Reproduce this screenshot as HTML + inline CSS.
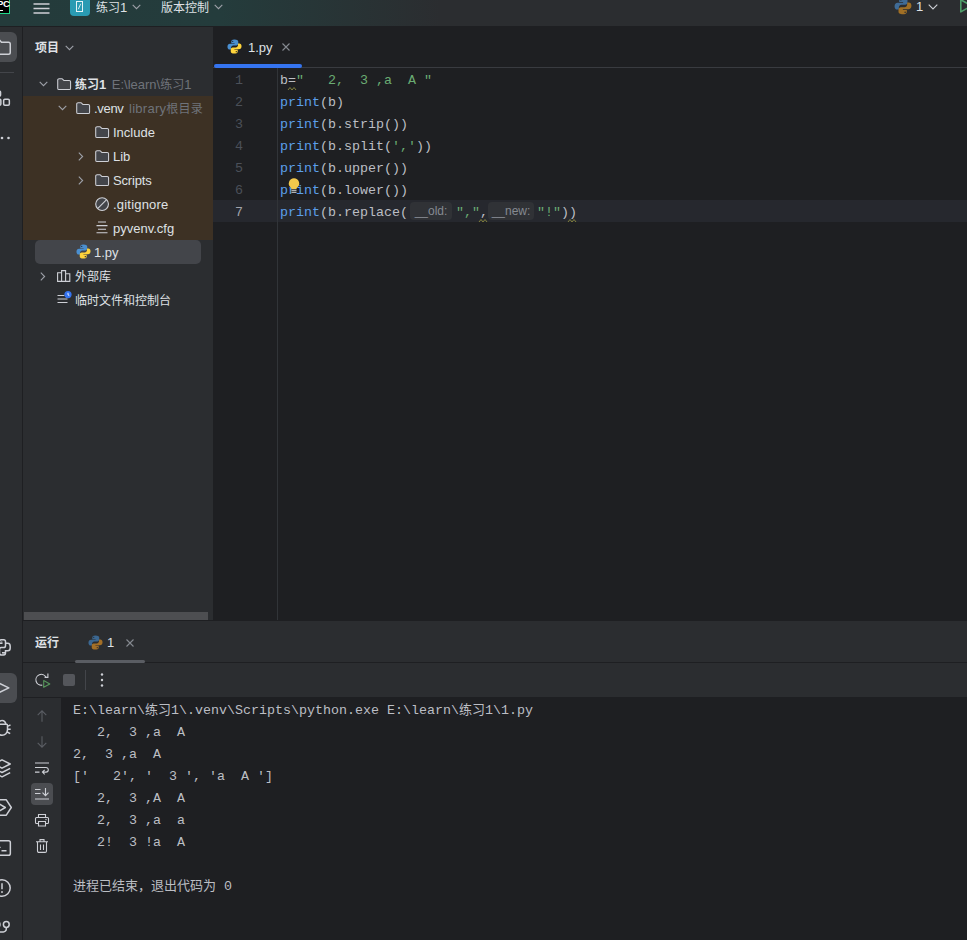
<!DOCTYPE html>
<html lang="zh-CN">
<head>
<meta charset="utf-8">
<title>练习1 – 1.py</title>
<style>
*{box-sizing:border-box;margin:0;padding:0}
html,body{width:967px;height:940px;overflow:hidden;background:#2b2d30}
body{position:relative;font-family:"Liberation Sans","Noto Sans CJK SC",sans-serif;font-size:13px;color:#dfe1e5}
.abs{position:absolute}
.ui{position:absolute;white-space:nowrap;line-height:24px;height:24px;padding-top:1px;font-size:13px;color:#dfe1e5}
.ui .cj{font-size:12px}
.gray{color:#6f737a}
svg{position:absolute;overflow:visible}
.mono{font-family:"Liberation Mono","Noto Sans CJK SC",monospace;font-size:13.33px;white-space:pre;line-height:22px;height:22px;position:absolute}
.code{color:#bcbec4}
.code .k{color:#5c9fea}
.code .s{color:#6aab73}
.ln{position:absolute;width:30px;text-align:right;font-family:"Liberation Mono",monospace;font-size:13.33px;line-height:22px;height:22px;color:#4b5059}
.con{color:#bcbec4}
.con .cj{font-size:13px}
.hint{position:absolute;height:18px;border-radius:4px;background:#303236;color:#868a91;font-family:"Liberation Sans",sans-serif;font-size:12px;line-height:18px;text-align:center;white-space:nowrap}
</style>
</head>
<body>

<!-- ===== top bar ===== -->
<div class="abs" id="topbar" style="left:0;top:0;width:967px;height:26px;background:linear-gradient(90deg,#243b3b 0,#243c3c 220px,#2b2d30 440px)"></div>
<div class="abs" style="left:0;top:26px;width:967px;height:1px;background:#1e1f22"></div>


<!-- top bar content -->
<div class="abs" style="left:0;top:0;width:10px;height:14px;background:#000;border-right:1px solid #21d789;border-bottom:1px solid #21d789"></div>
<div class="abs" style="left:-3px;top:-1px;font:bold 9.5px/10px 'Liberation Sans',sans-serif;color:#fff;letter-spacing:-0.3px">PC</div>
<div class="abs" style="left:0;top:10px;width:3px;height:1px;background:#fff"></div>
<svg style="left:33px;top:2px" width="17" height="13" viewBox="0 0 17 13"><path d="M0.5 2h16M0.5 6.5h16M0.5 11h16" stroke="#ced0d6" stroke-width="1.3" fill="none"/></svg>
<div class="abs" style="left:70px;top:-4.500px;width:20px;height:20px;border-radius:4px;background:#2a9bb3"></div>
<svg style="left:76px;top:1px" width="8" height="11" viewBox="0 0 8 11"><rect x="0.5" y="0.5" width="6" height="10" fill="none" stroke="#e6f4f7" stroke-width="1"/><path d="M2.3 8.2L4.7 2.8" stroke="#e6f4f7" stroke-width="0.9"/></svg>
<div class="ui" style="left:96px;top:-5px"><span class="cj">练习</span>1</div>
<svg style="left:132px;top:4px" width="9" height="6" viewBox="0 0 9 6"><path d="M0.7 0.8L4.5 4.6L8.3 0.8" stroke="#9da0a8" stroke-width="1.1" fill="none"/></svg>
<div class="ui" style="left:161px;top:-5px"><span class="cj">版本控制</span></div>
<svg style="left:214px;top:4px" width="9" height="6" viewBox="0 0 9 6"><path d="M0.7 0.8L4.5 4.6L8.3 0.8" stroke="#9da0a8" stroke-width="1.1" fill="none"/></svg>

<!-- ===== left stripe ===== -->
<div class="abs" id="stripe" style="left:0;top:27px;width:22px;height:913px;background:#2b2d30"></div>
<div class="abs" style="left:22px;top:27px;width:1px;height:913px;background:#1e1f22"></div>

<div class="abs" style="left:-13px;top:32px;width:30px;height:30px;border-radius:6px;background:#4b4d51"></div>
<svg style="left:-7px;top:39px" width="18" height="16" viewBox="0 0 18 16"><path d="M0.750 2.500a1.750 1.750 0 0 1 1.750-1.750h3.700l2.300 2.500h7a1.750 1.750 0 0 1 1.750 1.750v8.500a1.750 1.750 0 0 1-1.750 1.750h-13a1.750 1.750 0 0 1-1.750-1.750z" fill="none" stroke="#ced0d6" stroke-width="1.500"/></svg>
<div class="abs" style="left:0;top:72px;width:14px;height:1px;background:#43454a"></div>
<svg style="left:-8px;top:89px" width="18" height="18" viewBox="0 0 18 18"><rect x="3" y="2.150" width="5.550" height="4.800" rx="1" fill="none" stroke="#ced0d6" stroke-width="1.500"/><rect x="2" y="10.350" width="6.850" height="5.900" rx="1.200" fill="none" stroke="#ced0d6" stroke-width="1.500"/><rect x="11.650" y="10.350" width="5.700" height="5.900" rx="1.200" fill="none" stroke="#ced0d6" stroke-width="1.500"/></svg>
<svg style="left:-6px;top:136px" width="18" height="4" viewBox="0 0 18 4"><circle cx="1.500" cy="2" r="1.300" fill="#ced0d6"/><circle cx="8" cy="2" r="1.300" fill="#ced0d6"/><circle cx="14.500" cy="2" r="1.300" fill="#ced0d6"/></svg>
<svg style="left:-7px;top:639px" width="18" height="18" viewBox="0 0 18 18"><path d="M6.500 4.300V2.600c0-1 0.800-1.800 1.800-1.800h2.400c1 0 1.800 0.800 1.800 1.800v1.700h2.200c1.300 0 2.500 1.200 2.500 3.200v1.400c0 1.600-1 2.800-2.400 2.800h-2.300v2.400c0 1-0.800 1.800-1.800 1.800H8.300c-1 0-1.800-0.800-1.800-1.800v-2h-3c-1.500 0-2.700-1.200-2.700-2.800V7.100c0-1.600 1.200-2.800 2.700-2.800z M6.500 4.300h3 M12.500 13.700h-3.500 M12.500 4.300v2.500c0 1-0.800 1.800-1.800 1.800H8.300c-1 0-1.800 0.800-1.800 1.800v1.900" fill="none" stroke="#ced0d6" stroke-width="1.500"/><circle cx="8.800" cy="2.900" r="0.600" fill="#ced0d6"/><circle cx="10.200" cy="15.100" r="0.600" fill="#ced0d6"/></svg>
<div class="abs" style="left:-13px;top:673px;width:30px;height:30px;border-radius:6px;background:#4b4d51"></div>
<svg style="left:-6px;top:680px" width="16" height="16" viewBox="0 0 16 16"><path d="M1 1.200L14.800 7.900L1 14.600z" fill="none" stroke="#ced0d6" stroke-width="1.500" stroke-linejoin="round"/></svg>
<svg style="left:-7px;top:719px" width="18" height="18" viewBox="0 0 18 18"><path d="M5.200 5.300a3.800 3.800 0 0 1 7.600 0 M4.400 5.300h9.200a0.900 0.900 0 0 1 0.900 0.900v4.600a5.500 5.500 0 0 1-11 0V6.200a0.900 0.900 0 0 1 0.900-0.900z M14.500 7.300l3-1.500 M14.500 10.200h3.200 M14.200 13l3 1.700 M3.500 7.300l-3-1.500 M3.500 10.200H0.300 M3.800 13l-3 1.700" fill="none" stroke="#ced0d6" stroke-width="1.500"/></svg>
<svg style="left:-7px;top:759px" width="18" height="19" viewBox="0 0 18 19"><path d="M9 0.800L17.200 5L9 9.200L0.800 5z M0.800 9.300L9 13.500l8.200-4.200 M0.800 13.600L9 17.800l8.200-4.200" fill="none" stroke="#ced0d6" stroke-width="1.500" stroke-linejoin="round"/></svg>
<svg style="left:-7px;top:799px" width="19" height="17" viewBox="0 0 19 17"><path d="M1 0.800h12.300l5 7.700l-5 7.700H1z" fill="none" stroke="#ced0d6" stroke-width="1.500" stroke-linejoin="round"/><path d="M6 4.800l6.300 3.700L6 12.200z" fill="none" stroke="#ced0d6" stroke-width="1.500" stroke-linejoin="round"/></svg>
<svg style="left:-7px;top:840px" width="18" height="16" viewBox="0 0 18 16"><rect x="0.650" y="0.650" width="16.700" height="14.700" rx="1.800" fill="none" stroke="#ced0d6" stroke-width="1.500"/><path d="M3.800 4.500l3 2.800l-3 2.800 M8.500 10.800h5" fill="none" stroke="#ced0d6" stroke-width="1.500"/></svg>
<svg style="left:-7px;top:879px" width="18" height="18" viewBox="0 0 18 18"><circle cx="9" cy="9" r="8.200" fill="none" stroke="#ced0d6" stroke-width="1.500"/><path d="M9 4.300v6" stroke="#ced0d6" stroke-width="1.500"/><circle cx="9" cy="13" r="0.950" fill="#ced0d6"/></svg>
<svg style="left:-8px;top:919px" width="18" height="16" viewBox="0 0 18 16"><circle cx="14.300" cy="5.500" r="2.900" fill="none" stroke="#ced0d6" stroke-width="1.500"/><circle cx="5.050" cy="5.500" r="2.900" fill="none" stroke="#ced0d6" stroke-width="1.500"/><path d="M14.300 8.400v1.500a3 3 0 0 1-3 3H0" fill="none" stroke="#ced0d6" stroke-width="1.500"/></svg>

<!-- ===== project panel ===== -->
<div class="abs" id="project" style="left:23px;top:27px;width:190px;height:594px;background:#2b2d30"></div>

<div class="ui" style="left:35px;top:35px;font-weight:bold"><span class="cj" style="font-weight:bold">项目</span></div>
<svg style="left:65px;top:45px" width="9" height="6" viewBox="0 0 9 6"><path d="M0.7 0.8L4.5 4.6L8.3 0.8" stroke="#9da0a8" stroke-width="1.1" fill="none"/></svg>
<div class="abs" style="left:23px;top:96px;width:190px;height:144px;background:#3d3124"></div>
<div class="abs" style="left:35px;top:240px;width:166px;height:24px;border-radius:5px;background:#43454a"></div>
<svg style="left:39px;top:81px" width="9" height="6" viewBox="0 0 9 6"><path d="M0.7 0.8L4.5 4.6L8.3 0.8" stroke="#9da0a8" stroke-width="1.1" fill="none"/></svg>
<svg style="left:57px;top:77.5px" width="14.3" height="12.2" preserveAspectRatio="none" viewBox="0 0 15 13"><path d="M0.75 2.2a1.45 1.45 0 0 1 1.45-1.45h3.1l1.9 1.9h5.6a1.45 1.45 0 0 1 1.45 1.45v6.7a1.45 1.45 0 0 1-1.45 1.45H2.2a1.45 1.45 0 0 1-1.45-1.45z" fill="#43454a" stroke="#ced0d6" stroke-width="1.1"/></svg>
<div class="ui" style="left:75px;top:72px"><b><span class="cj">练习</span>1</b><span class="gray" style="margin-left:5.5px">E:\learn\<span class="cj">练习</span>1</span></div>
<svg style="left:58px;top:105px" width="9" height="6" viewBox="0 0 9 6"><path d="M0.7 0.8L4.5 4.6L8.3 0.8" stroke="#9da0a8" stroke-width="1.1" fill="none"/></svg>
<svg style="left:76px;top:101.5px" width="14.3" height="12.2" preserveAspectRatio="none" viewBox="0 0 15 13"><path d="M0.75 2.2a1.45 1.45 0 0 1 1.45-1.45h3.1l1.9 1.9h5.6a1.45 1.45 0 0 1 1.45 1.45v6.7a1.45 1.45 0 0 1-1.45 1.45H2.2a1.45 1.45 0 0 1-1.45-1.45z" fill="#43454a" stroke="#ced0d6" stroke-width="1.1"/></svg>
<div class="ui" style="left:94px;top:96px"><span style="letter-spacing:-0.3px">.venv</span><span class="gray" style="margin-left:5.5px;letter-spacing:0.25px">library<span class="cj">根目录</span></span></div>
<svg style="left:95px;top:125.5px" width="14.3" height="12.2" preserveAspectRatio="none" viewBox="0 0 15 13"><path d="M0.75 2.2a1.45 1.45 0 0 1 1.45-1.45h3.1l1.9 1.9h5.6a1.45 1.45 0 0 1 1.45 1.45v6.7a1.45 1.45 0 0 1-1.45 1.45H2.2a1.45 1.45 0 0 1-1.45-1.45z" fill="#43454a" stroke="#ced0d6" stroke-width="1.1"/></svg>
<div class="ui" style="left:113px;top:120px">Include</div>
<svg style="left:78px;top:151.5px" width="6" height="9" viewBox="0 0 6 9"><path d="M0.8 0.7L4.6 4.5L0.8 8.3" stroke="#9da0a8" stroke-width="1.1" fill="none"/></svg>
<svg style="left:95px;top:149.5px" width="14.3" height="12.2" preserveAspectRatio="none" viewBox="0 0 15 13"><path d="M0.75 2.2a1.45 1.45 0 0 1 1.45-1.45h3.1l1.9 1.9h5.6a1.45 1.45 0 0 1 1.45 1.45v6.7a1.45 1.45 0 0 1-1.45 1.45H2.2a1.45 1.45 0 0 1-1.45-1.45z" fill="#43454a" stroke="#ced0d6" stroke-width="1.1"/></svg>
<div class="ui" style="left:113px;top:144px">Lib</div>
<svg style="left:78px;top:175.5px" width="6" height="9" viewBox="0 0 6 9"><path d="M0.8 0.7L4.6 4.5L0.8 8.3" stroke="#9da0a8" stroke-width="1.1" fill="none"/></svg>
<svg style="left:95px;top:173.5px" width="14.3" height="12.2" preserveAspectRatio="none" viewBox="0 0 15 13"><path d="M0.75 2.2a1.45 1.45 0 0 1 1.45-1.45h3.1l1.9 1.9h5.6a1.45 1.45 0 0 1 1.45 1.45v6.7a1.45 1.45 0 0 1-1.45 1.45H2.2a1.45 1.45 0 0 1-1.45-1.45z" fill="#43454a" stroke="#ced0d6" stroke-width="1.1"/></svg>
<div class="ui" style="left:113px;top:168px;letter-spacing:-0.15px">Scripts</div>
<svg style="left:94.900px;top:197px" width="14.200" height="14.200" viewBox="0 0 14 14"><circle cx="7" cy="7" r="6.300" fill="#43454a" stroke="#ced0d6" stroke-width="1.100"/><path d="M2.800 11.200L11.200 2.800" stroke="#ced0d6" stroke-width="1.100"/></svg>
<div class="ui" style="left:113px;top:192px;letter-spacing:0.2px">.gitignore</div>
<svg style="left:96px;top:221px" width="12" height="13" viewBox="0 0 12 13"><path d="M2 1h8M0.500 4.600h11M2 8.200h8M0.500 11.800h11" stroke="#ced0d6" stroke-width="1.1" fill="none"/></svg>
<div class="ui" style="left:113px;top:216px">pyvenv.cfg</div>
<svg style="left:75.600px;top:244px" width="15" height="15" viewBox="0 0 16 16"><path d="M7.9 0.6c-3 0-3.3 1.3-3.3 2.2v1.7h3.5v0.6H3.2C1.6 5.1 0.5 6.2 0.5 8.2s1 3 2.3 3h1.5V9.3c0-1.3 1.1-2.4 2.4-2.4h3.3c1.1 0 2-0.9 2-2V2.8c0-1.100-0.900-2.200-4.100-2.200z" fill="#4a8fd0"/><circle cx="6.100" cy="2.500" r="0.700" fill="#1e1f22"/><path d="M8.1 15.400c3 0 3.300-1.300 3.300-2.200v-1.700H7.900v-0.600h4.900c1.600 0 2.700-1.100 2.700-3.100s-1-3-2.300-3h-1.500v1.900c0 1.300-1.100 2.400-2.400 2.400H6c-1.100 0-2 0.900-2 2v2.100c0 1.100 0.900 2.200 4.100 2.200z" fill="#ffd43b"/><circle cx="9.900" cy="13.500" r="0.700" fill="#1e1f22"/></svg>
<div class="ui" style="left:94px;top:240px">1.py</div>
<svg style="left:40px;top:271.5px" width="6" height="9" viewBox="0 0 6 9"><path d="M0.8 0.7L4.6 4.5L0.8 8.3" stroke="#9da0a8" stroke-width="1.1" fill="none"/></svg>
<svg style="left:57.400px;top:269.600px" width="14" height="13" viewBox="0 0 14 13"><path d="M0.600 2.800h4v8.600h-4zM4.600 0.600h4v10.800h-4zM8.600 3.800h4.200v7.600H8.600z" fill="none" stroke="#ced0d6" stroke-width="1.100"/></svg>
<div class="ui" style="left:75px;top:264px"><span class="cj">外部库</span></div>
<svg style="left:57.400px;top:291.2px" width="15" height="14" viewBox="0 0 15 14"><path d="M0.500 4.500h7M0.500 8h10M0.500 11.500h10" stroke="#ced0d6" stroke-width="1.100" fill="none"/><circle cx="11" cy="3.600" r="3.600" fill="#3574f0"/><path d="M11 1.800v2l1.300 0.800" stroke="#fff" stroke-width="0.900" fill="none"/></svg>
<div class="ui" style="left:75px;top:288px"><span class="cj">临时文件和控制台</span></div>
<div class="abs" style="left:24px;top:612px;width:184px;height:8px;background:#4d4e51"></div>

<!-- ===== editor ===== -->
<div class="abs" id="editor" style="left:213px;top:27px;width:754px;height:594px;background:#1e1f22"></div>

<svg style="left:226.600px;top:38.700px" width="15" height="15" viewBox="0 0 16 16"><path d="M7.900 0.600c-3 0-3.300 1.300-3.300 2.200v1.700h3.500v0.600H3.200C1.600 5.100 0.500 6.200 0.500 8.200s1 3 2.300 3h1.500V9.300c0-1.300 1.100-2.400 2.400-2.400h3.300c1.100 0 2-0.900 2-2V2.800c0-1.100-0.900-2.200-4.100-2.200z" fill="#4a8fd0"/><circle cx="6.100" cy="2.500" r="0.700" fill="#1e1f22"/><path d="M8.100 15.400c3 0 3.300-1.300 3.300-2.200v-1.700H7.900v-0.600h4.900c1.600 0 2.700-1.100 2.700-3.100s-1-3-2.300-3h-1.500v1.900c0 1.300-1.100 2.400-2.400 2.400H6c-1.100 0-2 0.900-2 2v2.100c0 1.100 0.900 2.200 4.100 2.200z" fill="#ffd43b"/><circle cx="9.900" cy="13.500" r="0.700" fill="#1e1f22"/></svg>
<div class="ui" style="left:248px;top:35px">1.py</div>
<svg style="left:281.800px;top:42.700px" width="8" height="8" viewBox="0 0 8 8"><path d="M0.500 0.500l7 7M7.500 0.500l-7 7" stroke="#868a91" stroke-width="1.100" fill="none"/></svg>
<div class="abs" style="left:213px;top:67px;width:754px;height:1px;background:#393b40"></div>
<div class="abs" style="left:214px;top:64px;width:88px;height:4px;border-radius:2px;background:#3574f0"></div>
<div class="abs" style="left:277px;top:68px;width:1px;height:552px;background:#313438"></div>
<div class="abs" style="left:213px;top:200px;width:754px;height:22px;background:#26282e"></div>
<div class="abs" style="left:277px;top:200px;width:1px;height:22px;background:#313438"></div>
<div class="ln" style="left:213px;top:70px;color:#4b5059">1</div>
<div class="ln" style="left:213px;top:92px;color:#4b5059">2</div>
<div class="ln" style="left:213px;top:114px;color:#4b5059">3</div>
<div class="ln" style="left:213px;top:136px;color:#4b5059">4</div>
<div class="ln" style="left:213px;top:158px;color:#4b5059">5</div>
<div class="ln" style="left:213px;top:180px;color:#4b5059">6</div>
<div class="ln" style="left:213px;top:202px;color:#a1a3ab">7</div>
<div class="mono code" style="left:280px;top:70px">b=<span class="s">"   2,  3 ,a  A "</span></div>
<div class="mono code" style="left:280px;top:92px"><span class="k">print</span>(b)</div>
<div class="mono code" style="left:280px;top:114px"><span class="k">print</span>(b.strip())</div>
<div class="mono code" style="left:280px;top:136px"><span class="k">print</span>(b.split(<span class="s">','</span>))</div>
<div class="mono code" style="left:280px;top:158px"><span class="k">print</span>(b.upper())</div>
<div class="mono code" style="left:280px;top:180px"><span class="k">print</span>(b.lower())</div>
<div class="mono code" style="left:280px;top:202px"><span class="k">print</span>(b.replace(</div>
<div class="hint" style="left:410px;top:202px;width:42px">__old:</div>
<div class="mono code" style="left:456px;top:202px"><span class="s">","</span>,</div>
<div class="hint" style="left:488px;top:202px;width:46px">__new:</div>
<div class="mono code" style="left:537px;top:202px"><span class="s">"!"</span>))</div>
<svg style="left:288px;top:87px" width="9" height="4" viewBox="0 0 9 4"><path d="M0 3l2-2.500l2 2.500l2-2.500l2 2.500" fill="none" stroke="#8c8a3e" stroke-width="0.900"/></svg>
<svg style="left:478.500px;top:218.500px" width="9" height="4" viewBox="0 0 9 4"><path d="M0 3l2-2.500l2 2.500l2-2.500l2 2.500" fill="none" stroke="#8c8a3e" stroke-width="0.900"/></svg>
<svg style="left:567.500px;top:218.500px" width="9" height="4" viewBox="0 0 9 4"><path d="M0 3l2-2.500l2 2.500l2-2.500l2 2.500" fill="none" stroke="#8c8a3e" stroke-width="0.900"/></svg>
<svg style="left:288px;top:178px" width="12" height="16" viewBox="0 0 12 16"><path d="M6 0.300a5.200 5.200 0 0 1 3.200 9.300c-0.500 0.400-0.700 0.900-0.700 1.400H3.500c0-0.500-0.200-1-0.700-1.400A5.200 5.200 0 0 1 6 0.300z" fill="#f2c94c"/><path d="M3.500 12.300h5M3.500 14.300h5" stroke="#dfe1e5" stroke-width="1.100"/></svg>

<!-- ===== run panel ===== -->
<div class="abs" style="left:23px;top:620px;width:944px;height:1px;background:#1e1f22"></div>
<div class="abs" id="run" style="left:23px;top:621px;width:944px;height:319px;background:#2b2d30"></div>
<div class="abs" style="left:23px;top:697px;width:38px;height:1px;background:#1e1f22"></div>
<div class="abs" id="console" style="left:61px;top:697px;width:906px;height:243px;background:#1e1f22"></div>

<div class="ui" style="left:35px;top:630px;font-weight:bold"><span class="cj">运行</span></div>
<svg style="left:88px;top:634.5px" width="15" height="15" viewBox="0 0 16 16"><path d="M7.900 0.600c-3 0-3.300 1.300-3.300 2.200v1.700h3.500v0.600H3.200C1.600 5.100 0.500 6.200 0.500 8.200s1 3 2.300 3h1.500V9.300c0-1.300 1.100-2.400 2.400-2.400h3.300c1.100 0 2-0.900 2-2V2.800c0-1.100-0.900-2.200-4.100-2.200z" fill="#3b6791"/><circle cx="6.100" cy="2.500" r="0.700" fill="#2b2d30"/><path d="M8.100 15.400c3 0 3.300-1.300 3.300-2.200v-1.700H7.900v-0.600h4.900c1.600 0 2.700-1.100 2.700-3.100s-1-3-2.300-3h-1.500v1.900c0 1.300-1.100 2.400-2.400 2.400H6c-1.100 0-2 0.900-2 2v2.100c0 1.100 0.900 2.200 4.100 2.200z" fill="#a36f27"/><circle cx="9.900" cy="13.500" r="0.700" fill="#2b2d30"/></svg>
<div class="ui" style="left:107px;top:630px">1</div>
<svg style="left:126px;top:639px" width="8" height="8" viewBox="0 0 8 8"><path d="M0.500 0.500l7 7M7.500 0.500l-7 7" stroke="#868a91" stroke-width="1.100" fill="none"/></svg>
<div class="abs" style="left:23px;top:662px;width:944px;height:1px;background:#1e1f22"></div>
<div class="abs" style="left:75px;top:660px;width:70px;height:3px;border-radius:1.500px;background:#5a5d63"></div>
<svg style="left:35px;top:672px" width="16" height="16" viewBox="0 0 16 16"><path d="M11.100 5.350A5.400 5.400 0 1 0 7.240 13.100" fill="none" stroke="#ced0d6" stroke-width="1.100"/><path d="M12.900 1.400v4H9.600" fill="none" stroke="#ced0d6" stroke-width="1.100"/><path d="M8.700 8.500l6.100 3.400l-6.100 3.400z" fill="#2b2d30" stroke="#57965c" stroke-width="1.100" stroke-linejoin="round"/></svg>
<div class="abs" style="left:63px;top:674px;width:12px;height:12px;border-radius:2px;background:#54565b"></div>
<div class="abs" style="left:85px;top:670px;width:1px;height:20px;background:#43454a"></div>
<svg style="left:100px;top:673px" width="4" height="14" viewBox="0 0 4 14"><circle cx="2" cy="1.500" r="1.200" fill="#ced0d6"/><circle cx="2" cy="7" r="1.200" fill="#ced0d6"/><circle cx="2" cy="12.500" r="1.200" fill="#ced0d6"/></svg>

<svg style="left:37px;top:710px" width="10" height="12" viewBox="0 0 10 12"><path d="M5 11.700V0.900M0.700 5.200L5 0.900l4.300 4.300" fill="none" stroke="#5a5d63" stroke-width="1.100"/></svg>
<svg style="left:37px;top:736px" width="10" height="12" viewBox="0 0 10 12"><path d="M5 0.300v10.800M0.700 6.800L5 11.100l4.300-4.300" fill="none" stroke="#5a5d63" stroke-width="1.100"/></svg>
<svg style="left:35px;top:762px" width="14" height="12" viewBox="0 0 14 12"><path d="M0 1h14M0 5.500h11a2.300 2.300 0 0 1 0 4.600H7.500M0 10.100h4.500M9.700 7.800L7.400 10.100l2.300 2.300" fill="none" stroke="#ced0d6" stroke-width="1.100"/></svg>
<div class="abs" style="left:31px;top:783px;width:22px;height:22px;border-radius:4px;background:#4b4d51"></div>
<svg style="left:35px;top:788px" width="14" height="12" viewBox="0 0 14 12"><path d="M0 1.500h5.500M0 5.500h5.500M0 11h14M10.500 0v7.500M7.500 4.700l3 3l3-3" fill="none" stroke="#ced0d6" stroke-width="1.100"/></svg>
<svg style="left:35px;top:813px" width="14" height="14" viewBox="0 0 14 14"><path d="M3.500 4.500V1.500h7v3M3.500 10.500H1.500a1 1 0 0 1-1-1v-4a1 1 0 0 1 1-1h11a1 1 0 0 1 1 1v4a1 1 0 0 1-1 1h-2M3.500 8.500h7v4.500h-7z" fill="none" stroke="#ced0d6" stroke-width="1.100"/><circle cx="11" cy="6.500" r="0.700" fill="#ced0d6"/></svg>
<svg style="left:36px;top:839px" width="12" height="14" viewBox="0 0 12 14"><path d="M0 2.800h12M4 2.600V0.600h4v2M1.500 2.800v9.200a1.400 1.400 0 0 0 1.400 1.400h6.200a1.400 1.400 0 0 0 1.400-1.400V2.800M4.500 5.500v5.500M7.500 5.500v5.500" fill="none" stroke="#ced0d6" stroke-width="1.100"/></svg>
<div class="mono con" style="left:73px;top:700px">E:\learn\<span class="cj">练习</span>1\.venv\Scripts\python.exe E:\learn\<span class="cj">练习</span>1\1.py</div>
<div class="mono con" style="left:73px;top:722px">   2,  3 ,a  A </div>
<div class="mono con" style="left:73px;top:744px">2,  3 ,a  A</div>
<div class="mono con" style="left:73px;top:766px">['   2', '  3 ', 'a  A ']</div>
<div class="mono con" style="left:73px;top:788px">   2,  3 ,A  A </div>
<div class="mono con" style="left:73px;top:810px">   2,  3 ,a  a </div>
<div class="mono con" style="left:73px;top:832px">   2!  3 !a  A </div>
<div class="mono con" style="left:73px;top:876px"><span class="cj">进程已结束，退出代码为</span> 0</div>
<svg style="left:893.5px;top:-3px" width="18" height="18" viewBox="0 0 16 16"><path d="M7.900 0.600c-3 0-3.300 1.300-3.300 2.200v1.700h3.500v0.600H3.200C1.600 5.100 0.500 6.200 0.500 8.200s1 3 2.300 3h1.500V9.300c0-1.300 1.100-2.400 2.400-2.400h3.300c1.100 0 2-0.900 2-2V2.800c0-1.100-0.900-2.200-4.100-2.200z" fill="#3f6b96"/><circle cx="6.100" cy="2.500" r="0.700" fill="#2b2d30"/><path d="M8.100 15.400c3 0 3.300-1.300 3.300-2.200v-1.700H7.900v-0.600h4.900c1.600 0 2.700-1.100 2.700-3.100s-1-3-2.300-3h-1.500v1.900c0 1.300-1.100 2.400-2.400 2.400H6c-1.100 0-2 0.900-2 2v2.100c0 1.100 0.900 2.200 4.100 2.200z" fill="#a06f25"/><circle cx="9.900" cy="13.500" r="0.700" fill="#2b2d30"/></svg>
<div class="ui" style="left:916px;top:-6px">1</div>
<svg style="left:928px;top:4px" width="10" height="6" viewBox="0 0 10 6"><path d="M0.700 0.700L5 5l4.300-4.300" stroke="#ced0d6" stroke-width="1.100" fill="none"/></svg>
<svg style="left:960px;top:-1px" width="12" height="14" viewBox="0 0 12 14"><path d="M0.800 0.700L11.500 6.800L0.800 12.900z" fill="none" stroke="#4f9e6a" stroke-width="1.600" stroke-linejoin="round"/></svg>

</body>
</html>
